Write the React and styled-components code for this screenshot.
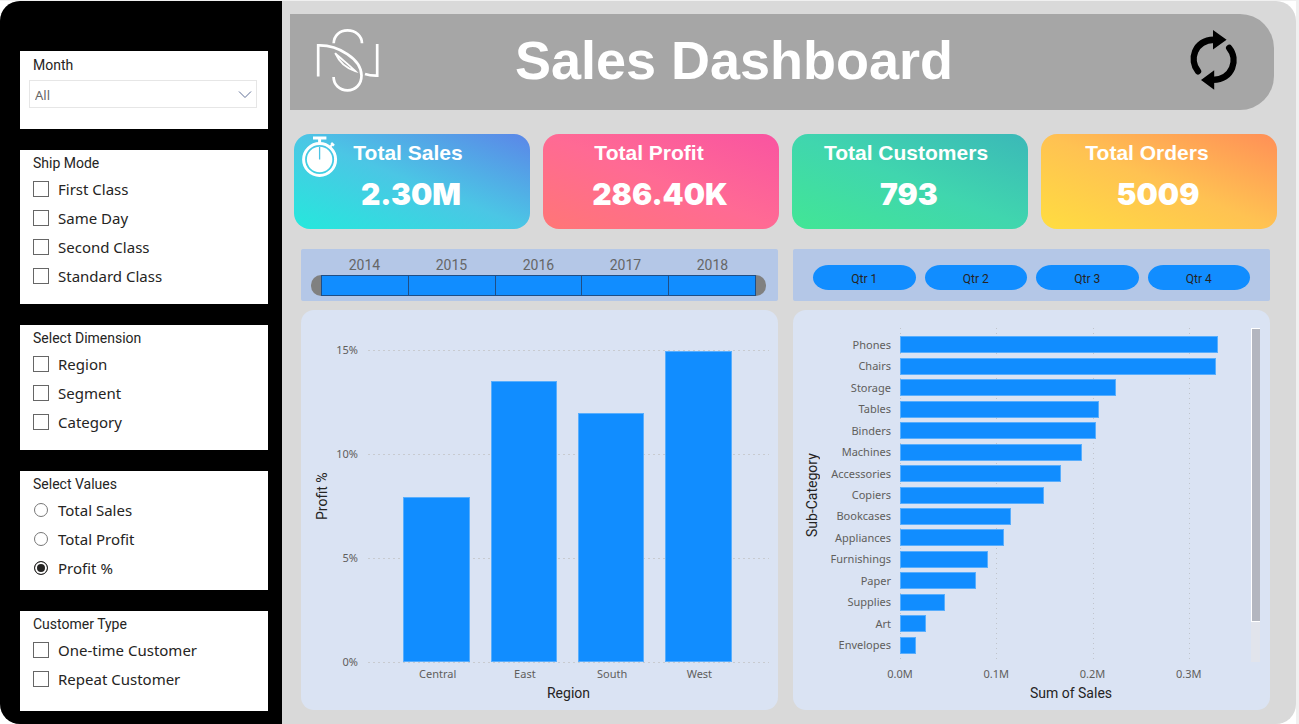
import React, { useState } from "react";
import styled, { createGlobalStyle } from "styled-components";

const sans = '"Noto Sans", "Open Sans", sans-serif';
const din = 'Roboto, "Open Sans", sans-serif';
const arial = '"Liberation Sans", Arial, sans-serif';
const blue = "#118dff";

const Global = createGlobalStyle`
  *, *::before, *::after { box-sizing: border-box; }
  body { margin: 0; background: #ffffff; font-family: ${sans}; color: #252423; }
  h1, h2 { margin: 0; }
`;

/* ---------- page frame ---------- */

const Page = styled.div`
  background: #ffffff;
  border-top: 1px solid #f0f0f0;
  border-right: 3px solid #f0f0f0;
`;

const Board = styled.div`
  display: grid;
  grid-template-columns: 282px minmax(0, 1fr);
  min-height: calc(100vh - 1px);
  border-radius: 20px;
  overflow: hidden;
  background: #d9d9d9;
`;

const Sidebar = styled.aside`
  display: flex;
  flex-direction: column;
  gap: 21px;
  padding: 50px 14px 13px 20px;
  background: #000000;
`;

const Main = styled.main`
  display: flex;
  flex-direction: column;
  padding: 13px 19px 14px 8px;
`;

/* ---------- slicer panels ---------- */

const Panel = styled.fieldset`
  min-width: 0;
  margin: 0;
  border: 0;
  padding: 4px 12px ${(p) => p.$bottom}px 13px;
  background: #ffffff;
`;

const PanelTitle = styled.legend`
  float: left;
  width: 100%;
  margin-bottom: 2px;
  padding: 0;
  font: 400 14px/18px ${din};
`;

const OptionRow = styled.label`
  clear: both;
  display: flex;
  align-items: center;
  gap: 9px;
  height: 29px;
  font: 400 15px/20px ${sans};
`;

const Checkbox = styled.input.attrs({ type: "checkbox" })`
  appearance: none;
  width: 16px;
  height: 16px;
  margin: 0;
  border: 1px solid #666666;
  background: #ffffff;
  &:checked {
    background: #252423;
    box-shadow: inset 0 0 0 2px #ffffff;
  }
`;

const Radio = styled.input.attrs({ type: "radio" })`
  appearance: none;
  width: 14px;
  height: 14px;
  margin: 0 1px;
  border: 1px solid #777777;
  border-radius: 50%;
  background: #ffffff;
  &:checked {
    border-color: #252423;
    background: #252423;
    box-shadow: inset 0 0 0 2px #ffffff;
  }
`;

const MonthPanel = styled.div`
  padding: 5px 11px 21px 9px;
  background: #ffffff;
`;

const MonthLabel = styled.label`
  display: block;
  padding-left: 4px;
  margin-bottom: 6px;
  font: 400 14px/18px ${din};
`;

const SelectBox = styled.div`
  display: grid;
  align-items: center;
  > * { grid-area: 1 / 1; }
  > svg { justify-self: end; margin-right: 5px; pointer-events: none; }
`;

const Select = styled.select`
  appearance: none;
  width: 100%;
  height: 28px;
  padding: 2px 24px 0 5px;
  border: 1px solid #e6e6e6;
  border-radius: 0;
  background: #ffffff;
  color: #666666;
  font: 400 13px/18px ${sans};
`;

/* ---------- header ---------- */

const Header = styled.header`
  display: flex;
  align-items: center;
  height: 96px;
  margin-right: 3px;
  padding: 0 35px 4px 26px;
  border-radius: 0 34px 34px 0;
  background: #a6a6a6;
`;

const Title = styled.h1`
  flex: 1;
  padding-right: 101px;
  text-align: center;
  color: #ffffff;
  font: 700 54px/62px ${arial};
`;

const IconButton = styled.button`
  display: flex;
  padding: 0;
  border: 0;
  background: none;
  cursor: pointer;
`;

/* ---------- KPI cards ---------- */

const Cards = styled.section`
  display: grid;
  grid-template-columns: repeat(4, minmax(0, 1fr));
  gap: 13px;
  margin: 24px 0 0 4px;
`;

const Card = styled.article`
  position: relative;
  height: 95px;
  padding-top: 6px;
  border-radius: 16px;
  background: linear-gradient(to top right, ${(p) => p.$stops.join(", ")});
  color: #ffffff;
  text-align: center;
`;

const CardTitle = styled.h2`
  padding-right: ${(p) => p.$inset}px;
  font: 700 21px/26px ${arial};
`;

const CardValue = styled.div`
  margin-top: 8px;
  padding-right: 2px;
  font: 900 30px/40px Inter, ${arial};
`;

const CardIcon = styled.span`
  position: absolute;
  left: 7px;
  top: 2px;
  display: flex;
`;

/* ---------- time slicers ---------- */

const Columns = styled.div`
  display: grid;
  grid-template-columns: repeat(2, minmax(0, 1fr));
  gap: 9px 15px;
  margin: 20px 7px 0 11px;
`;

const Slicer = styled.section`
  height: 52px;
  border-radius: 2px;
  background: #b4c7e7;
`;

const YearSlicer = styled(Slicer)`
  padding: 6px 12px 0 10px;
`;

const YearLabels = styled.div`
  display: flex;
  padding: 0 10px;
  span {
    flex: 1;
    text-align: center;
    color: #666666;
    font: 400 14px/20px ${din};
  }
`;

const YearTrack = styled.div`
  display: flex;
  height: 21px;
`;

const YearCell = styled.button`
  flex: 1;
  padding: 0;
  border: 1px solid #1f4e86;
  border-left-width: ${(p) => (p.$first ? 1 : 0)}px;
  border-radius: 0;
  background: ${blue};
`;

const Handle = styled.span`
  width: 10px;
  border-radius: ${(p) => (p.$end ? "0 11px 11px 0" : "11px 0 0 11px")};
  background: #808080;
`;

const QuarterSlicer = styled(Slicer)`
  display: flex;
  gap: 9px;
  padding: 16px 20px 0;
`;

const Quarter = styled.button`
  flex: 1;
  height: 25px;
  padding: 3px 0 0;
  border: 0;
  border-radius: 16px / 13px;
  background: ${blue};
  color: #252423;
  font: 400 12px/16px ${din};
`;

/* ---------- charts ---------- */

const ColumnPanel = styled.section`
  display: grid;
  grid-template-columns: 16px 28px minmax(0, 1fr);
  grid-template-rows: 332px auto auto;
  align-content: start;
  height: 400px;
  padding: 20px 9px 0 13px;
  border-radius: 13px;
  background: #dae3f3;
`;

const BarPanel = styled.section`
  display: grid;
  grid-template-columns: 16px 71px minmax(0, 1fr) 9px;
  grid-template-rows: 334px auto auto;
  align-content: start;
  height: 400px;
  padding: 18px 10px 0 11px;
  border-radius: 13px;
  background: #dae3f3;
`;

const VerticalTitle = styled.div`
  writing-mode: vertical-rl;
  transform: rotate(180deg);
  text-align: center;
  font: 400 14px/16px ${din};
`;

const AxisTitle = styled.div`
  grid-column: 3;
  margin-left: ${(p) => p.$gap}px;
  text-align: center;
  font: 400 14px/18px ${din};
`;

const Tick = styled.span`
  color: #605e5c;
  font: 400 11px/16px ${sans};
  white-space: nowrap;
`;

const ValueTicks = styled.div`
  display: flex;
  flex-direction: column;
  justify-content: space-between;
  margin: 12px 0 -8px;
  text-align: right;
`;

const ColumnPlot = styled.div`
  position: relative;
  margin: 20px 0 0 10px;
`;

const RowLines = styled.div`
  position: absolute;
  inset: 0 0 -1px;
  display: flex;
  flex-direction: column;
  justify-content: space-between;
  i {
    height: 1px;
    background: repeating-linear-gradient(90deg, #c8cbd0 0 2px, transparent 2px 5px);
  }
`;

const ColumnSet = styled.div`
  position: relative;
  display: flex;
  align-items: flex-end;
  justify-content: space-around;
  height: 100%;
  padding: 0 27px 0 25px;
`;

const Column = styled.div`
  width: 19%;
  border: 1px solid #58aefd;
  background: ${blue};
`;

const Categories = styled.div`
  grid-column: 3;
  display: flex;
  margin: 4px 0 2px 10px;
  padding: 0 26px;
  ${Tick} { flex: 1; text-align: center; }
`;

const RowLabels = styled.div`
  display: flex;
  flex-direction: column;
  padding: 6px 0;
  ${Tick} {
    flex: 1;
    display: flex;
    align-items: center;
    justify-content: flex-end;
  }
`;

const BarPlot = styled.div`
  position: relative;
  margin: 0 14px 0 9px;
`;

const ColumnLines = styled.div`
  position: absolute;
  inset: 0;
  display: grid;
  grid-template-columns: repeat(3, 28.571%) 1fr;
  i {
    width: 1px;
    background: repeating-linear-gradient(180deg, #c0c4cb 0 1px, transparent 1px 5px);
  }
`;

const BarSet = styled.div`
  position: relative;
  display: flex;
  flex-direction: column;
  height: 100%;
  padding: 6px 0;
`;

const BarRow = styled.div`
  flex: 1;
  display: flex;
  align-items: center;
`;

const Bar = styled.div`
  height: 17px;
  border: 1px solid #58aefd;
  background: ${blue};
`;

const BarTicks = styled.div`
  grid-column: 3;
  margin: 4px 14px 2px 9px;
  > div {
    display: flex;
    margin-left: -14.286%;
  }
  ${Tick} { flex: 1; text-align: center; }
`;

const ScrollTrack = styled.div`
  background: #e1e4ec;
`;

const ScrollThumb = styled.div`
  height: 88%;
  border: solid #ffffff;
  border-width: 1px 0 1px 1px;
  background: #b3b6bf;
`;

/* ---------- drawings ---------- */

const Chevron = () => (
  <svg width="14" height="9" viewBox="0 0 14 9" fill="none" stroke="#5f6f96" strokeWidth="1">
    <path d="M1 1.5 7 7.5 13 1.5" />
  </svg>
);

const Monogram = () => (
  <svg width="64" height="64" viewBox="6 5 64 64" fill="none" stroke="#ffffff" strokeWidth="2.7">
    <path d="M8.2 53.6V22.4C28 21.8 51.5 36 51.5 52.5 51.5 61.5 45.5 67.3 37.5 67.3S23.6 61.5 23.6 54" />
    <path d="M23.7 20.2C24 12.5 29.5 7.4 37.5 7.4S51.8 12.5 52 20.2" />
    <path d="M67.2 21V52.6C62.8 52.7 58.8 52.3 55 51" />
    <path d="M25.2 30.2C29.5 39.5 36.5 45.5 45.2 48 39 41.8 32.5 37 25.2 30.2Z" strokeWidth="1.9" />
  </svg>
);

const RefreshArrows = () => (
  <svg width="50" height="60" viewBox="5 4 50 60" fill="none" stroke="#000000" strokeWidth="6.4" strokeLinecap="round">
    <path d="M14 45.3C5 34 10 14.5 30 13.7" />
    <path d="M45.2 22C54.5 33.5 49 53 29 53.9" />
    <path d="M29 4 42.6 13.7 29 23.4ZM30.2 44.2 17 53.9 30.2 63.8Z" fill="#000000" stroke="none" />
  </svg>
);

const Stopwatch = () => (
  <svg width="38" height="42" viewBox="5 6 38 42" fill="none" stroke="#ffffff">
    <circle cx="23.6" cy="29.5" r="16" strokeWidth="3" />
    <circle cx="23.6" cy="29.5" r="12.7" fill="#ffffff" stroke="none" />
    <path d="M17 8H30.4M23.6 8V13" strokeWidth="3" />
    <path d="M33.8 17.2 37 13.8" strokeWidth="2" />
    <path d="M35.2 13 38 15.6" strokeWidth="2.4" />
    <path d="M23.6 17V29.5" stroke="#4cc3e4" strokeWidth="1.3" />
  </svg>
);

/* ---------- data ---------- */

const cards = [
  { title: "Total Sales", value: "2.30M", stops: ["#25e8dc", "#4bc6e5", "#5b86e8"], inset: 8, icon: true },
  { title: "Total Profit", value: "286.40K", stops: ["#ff7676", "#ff6a94", "#f954a1"], inset: 24 },
  { title: "Total Customers", value: "793", stops: ["#42e695", "#40d6ae", "#3bb8b8"], inset: 8 },
  { title: "Total Orders", value: "5009", stops: ["#ffdd40", "#ffc252", "#ff8f57"], inset: 24 },
];

const regions = [
  ["Central", 7.95],
  ["East", 13.5],
  ["South", 11.95],
  ["West", 14.97],
];

const subCategories = [
  ["Phones", 330],
  ["Chairs", 328.5],
  ["Storage", 224],
  ["Tables", 207],
  ["Binders", 203.5],
  ["Machines", 189.3],
  ["Accessories", 167.5],
  ["Copiers", 149.6],
  ["Bookcases", 114.9],
  ["Appliances", 107.6],
  ["Furnishings", 91.8],
  ["Paper", 78.5],
  ["Supplies", 46.7],
  ["Art", 27.2],
  ["Envelopes", 16.5],
];

function CheckList({ title, options, bottom }) {
  return (
    <Panel $bottom={bottom}>
      <PanelTitle>{title}</PanelTitle>
      {options.map((name) => (
        <OptionRow key={name}>
          <Checkbox />
          {name}
        </OptionRow>
      ))}
    </Panel>
  );
}

export default function App() {
  const [measure, setMeasure] = useState("Profit %");
  return (
    <Page>
      <Global />
      <Board>
        <Sidebar>
          <MonthPanel>
            <MonthLabel htmlFor="month">Month</MonthLabel>
            <SelectBox>
              <Select id="month">
                <option>All</option>
              </Select>
              <Chevron />
            </SelectBox>
          </MonthPanel>
          <CheckList
            title="Ship Mode"
            options={["First Class", "Same Day", "Second Class", "Standard Class"]}
            bottom={14}
          />
          <CheckList title="Select Dimension" options={["Region", "Segment", "Category"]} bottom={14} />
          <Panel $bottom={8}>
            <PanelTitle>Select Values</PanelTitle>
            {["Total Sales", "Total Profit", "Profit %"].map((name) => (
              <OptionRow key={name}>
                <Radio name="measure" checked={measure === name} onChange={() => setMeasure(name)} />
                {name}
              </OptionRow>
            ))}
          </Panel>
          <CheckList title="Customer Type" options={["One-time Customer", "Repeat Customer"]} bottom={18} />
        </Sidebar>

        <Main>
          <Header>
            <Monogram />
            <Title>Sales Dashboard</Title>
            <IconButton aria-label="Refresh">
              <RefreshArrows />
            </IconButton>
          </Header>

          <Cards>
            {cards.map((c) => (
              <Card key={c.title} $stops={c.stops}>
                {c.icon && (
                  <CardIcon>
                    <Stopwatch />
                  </CardIcon>
                )}
                <CardTitle $inset={c.inset}>{c.title}</CardTitle>
                <CardValue>{c.value}</CardValue>
              </Card>
            ))}
          </Cards>

          <Columns>
            <YearSlicer>
              <YearLabels>
                {[2014, 2015, 2016, 2017, 2018].map((y) => (
                  <span key={y}>{y}</span>
                ))}
              </YearLabels>
              <YearTrack>
                <Handle />
                {[2014, 2015, 2016, 2017, 2018].map((y, i) => (
                  <YearCell key={y} $first={i === 0} aria-label={String(y)} />
                ))}
                <Handle $end />
              </YearTrack>
            </YearSlicer>

            <QuarterSlicer>
              {[1, 2, 3, 4].map((q) => (
                <Quarter key={q}>{`Qtr ${q}`}</Quarter>
              ))}
            </QuarterSlicer>

            <ColumnPanel>
              <VerticalTitle>Profit %</VerticalTitle>
              <ValueTicks>
                {["15%", "10%", "5%", "0%"].map((t) => (
                  <Tick key={t}>{t}</Tick>
                ))}
              </ValueTicks>
              <ColumnPlot>
                <RowLines>
                  <i />
                  <i />
                  <i />
                  <i />
                </RowLines>
                <ColumnSet>
                  {regions.map(([name, value]) => (
                    <Column key={name} style={{ height: `${(value / 15) * 100}%` }} />
                  ))}
                </ColumnSet>
              </ColumnPlot>
              <Categories>
                {regions.map(([name]) => (
                  <Tick key={name}>{name}</Tick>
                ))}
              </Categories>
              <AxisTitle $gap={10}>Region</AxisTitle>
            </ColumnPanel>

            <BarPanel>
              <VerticalTitle>Sub-Category</VerticalTitle>
              <RowLabels>
                {subCategories.map(([name]) => (
                  <Tick key={name}>{name}</Tick>
                ))}
              </RowLabels>
              <BarPlot>
                <ColumnLines>
                  <i />
                  <i />
                  <i />
                  <i />
                </ColumnLines>
                <BarSet>
                  {subCategories.map(([name, value]) => (
                    <BarRow key={name}>
                      <Bar style={{ width: `${(value / 350) * 100}%` }} />
                    </BarRow>
                  ))}
                </BarSet>
              </BarPlot>
              <ScrollTrack>
                <ScrollThumb />
              </ScrollTrack>
              <BarTicks>
                <div>
                  {["0.0M", "0.1M", "0.2M", "0.3M"].map((t) => (
                    <Tick key={t}>{t}</Tick>
                  ))}
                </div>
              </BarTicks>
              <AxisTitle $gap={0}>Sum of Sales</AxisTitle>
            </BarPanel>
          </Columns>
        </Main>
      </Board>
    </Page>
  );
}
